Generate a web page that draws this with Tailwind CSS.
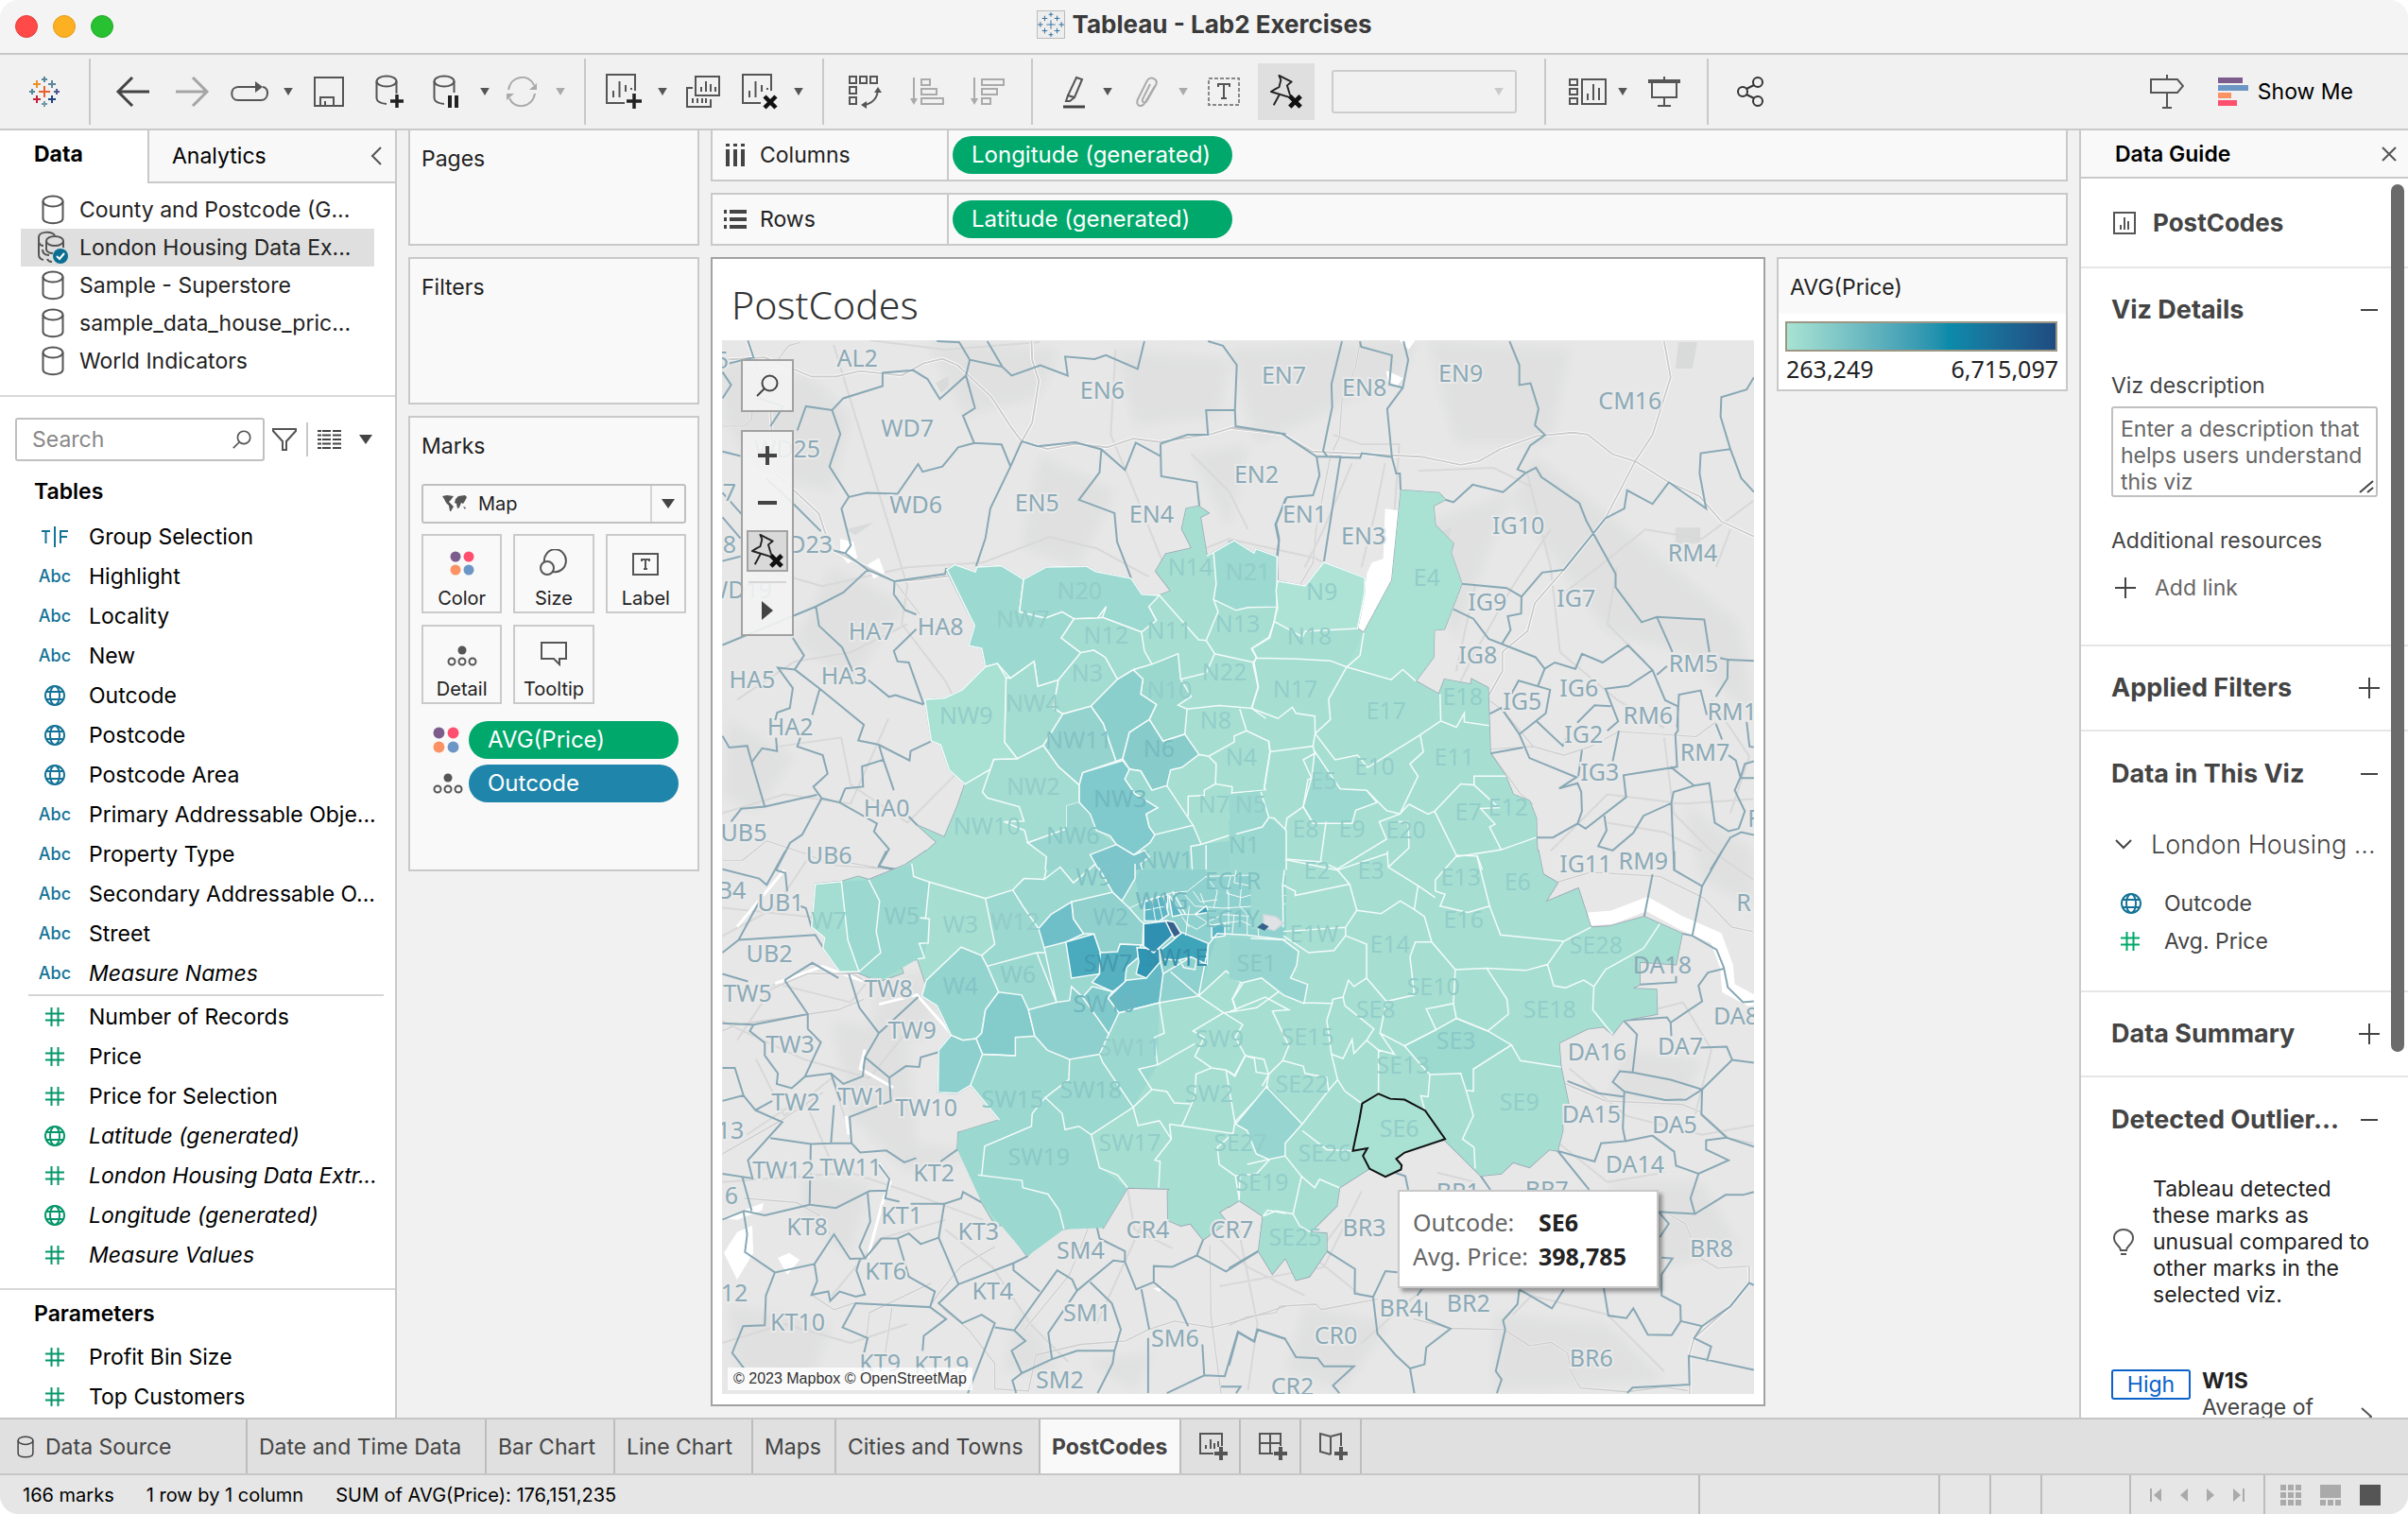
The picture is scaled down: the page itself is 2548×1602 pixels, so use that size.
<!DOCTYPE html>
<html lang="en">
<head>
<meta charset="utf-8">
<title>Tableau - Lab2 Exercises</title>
<script src="https://cdn.jsdelivr.net/npm/@tailwindcss/browser@4"></script>
</head>
<body class="bg-white">
<svg class="hidden" aria-hidden="true">
  <symbol id="caret" viewBox="0 0 12 10"><path d="M0 0H12L6 10Z" fill="currentColor"/></symbol>
  <symbol id="db" viewBox="0 0 24 32"><g fill="none" stroke="currentColor" stroke-width="2"><ellipse cx="12" cy="7" rx="10.500" ry="5.500"/><path d="M1.500 7V25C1.500 32 22.500 32 22.500 25V7"/></g></symbol>
  <symbol id="hash" viewBox="0 0 20 20"><path d="M6.500 0V20M13.500 0V20M0 6.500H20M0 13.500H20" fill="none" stroke="currentColor" stroke-width="2"/></symbol>
  <symbol id="globe" viewBox="0 0 22 22"><g fill="none" stroke="currentColor" stroke-width="2"><circle cx="11" cy="11" r="10"/><ellipse cx="11" cy="11" rx="5" ry="10"/><path d="M2 7H20M2 15H20"/></g></symbol>
  <symbol id="tf" viewBox="0 0 28 22"><path d="M0 5H9M4.500 5V18M14 0V22M20 18V5H28M20 11H27" fill="none" stroke="currentColor" stroke-width="2"/></symbol>
  <symbol id="lens" viewBox="0 0 24 24"><g fill="none" stroke="currentColor" stroke-width="2"><circle cx="14.500" cy="9.500" r="8"/><path d="M9 15L1 23"/></g></symbol>
  <symbol id="dots4" viewBox="0 0 26 26"><circle cx="6" cy="6" r="5.500" fill="#7b5c8d"/><circle cx="20" cy="6" r="5.500" fill="#ff4f6e"/><circle cx="6" cy="20" r="5.500" fill="#fb9263"/><circle cx="20" cy="20" r="5.500" fill="#6c96c5"/></symbol>
  <symbol id="detail" viewBox="0 0 32 22"><circle cx="16" cy="5" r="4.500" fill="#555"/><g fill="none" stroke="#555" stroke-width="2"><circle cx="5" cy="17" r="3.500"/><circle cx="16" cy="17" r="3.500"/><circle cx="27" cy="17" r="3.500"/></g></symbol>
  <symbol id="pin" viewBox="0 0 38 38"><path d="M11 1L25 8L20 12L23 22L25 26L2 19L7 16L11 14L13 6Z M11 23L5 34" fill="none" stroke="#222" stroke-width="2" stroke-linejoin="round"/><path d="M23 24L35 36M35 24L23 36" stroke="#111" stroke-width="5"/></symbol>
  <symbol id="sheet" viewBox="0 0 40 40"><path d="M21 32H2V2H32V19M9 26V19M15.500 26V9M22 20V13M28 18V16" fill="none" stroke="#555" stroke-width="2"/></symbol>
  <symbol id="plus" viewBox="0 0 22 22"><path d="M11 0V22M0 11H22" stroke="#444" stroke-width="2"/></symbol>
  <symbol id="minus" viewBox="0 0 22 22"><path d="M2 11H20" stroke="#444" stroke-width="2"/></symbol>
</svg>

<div class="h-screen w-full flex flex-col overflow-hidden rounded-[20px] bg-[#f1f1f1] font-[Inter,sans-serif] text-[23px] leading-7 text-[#222]">
  <!-- Title bar -->
  <header class="relative h-[58px] shrink-0 pb-1 flex items-center justify-center border-b-2 border-[#c8c8c8] bg-[#f4f4f4]">
    <div class="absolute left-4 top-4 flex gap-4">
      <button aria-label="Close" class="size-6 rounded-full bg-[#ff4a47] border border-[#e0403d]"></button>
      <button aria-label="Minimise" class="size-6 rounded-full bg-[#fdb022] border border-[#e09c1c]"></button>
      <button aria-label="Zoom" class="size-6 rounded-full bg-[#28c131] border border-[#1fa828]"></button>
    </div>
    <svg class="w-[30px] h-[30px] mr-2 bg-[#eee] border border-[#bbb]" viewBox="0 0 30 30"><path d="M15 10V20M10 15H20M15 1V6M12.500 3.500H17.500M15 24V29M12.500 26.500H17.500M3 12V18M0 15H6M27 12V18M24 15H30M8 5V11M5 8H11M22 5V11M19 8H25M8 19V25M5 22H11M22 19V25M19 22H25" stroke="#2a6a9c" stroke-width="1"/></svg>
    <h1 class="text-[26px] font-bold text-[#3a3a3a]">Tableau - Lab2 Exercises</h1>
  </header>

  <!-- Toolbar -->
  <nav class="h-[78px] shrink-0 flex items-center text-[#555]" aria-label="Toolbar">
    <div class="h-[70px] w-24 border-r-2 border-[#c9c9c9] flex items-center justify-center">
      <svg class="size-8" viewBox="0 0 32 32" fill="none" stroke-width="2"><path d="M16 10V22M10 16H22" stroke="#e8622c"/><path d="M8 4V12M4 8H12" stroke="#eb912c"/><path d="M24 4V12M20 8H28" stroke="#5b879b"/><path d="M8 20V28M4 24H12" stroke="#c72037"/><path d="M24 20V28M20 24H28" stroke="#1f447e"/><path d="M16 0V6M13 3H19M3 13V19M0 16H6" stroke="#59879b"/><path d="M29 13V19M26 16H32" stroke="#4e5a8f"/><path d="M16 26V32M13 29H19" stroke="#7199a6"/></svg>
    </div>
    <div class="h-[70px] w-[524px] pl-3 border-r-2 border-[#c9c9c9] flex items-center">
      <button aria-label="Back" class="w-16 flex justify-center"><svg class="w-9 h-8" viewBox="0 0 36 32"><path d="M36 16H3M18 1L3 16L18 31" fill="none" stroke="#444" stroke-width="3"/></svg></button>
      <button aria-label="Forward" class="w-16 flex justify-center"><svg class="w-9 h-8" viewBox="0 0 36 32"><path d="M0 16H33M18 1L33 16L18 31" fill="none" stroke="#a5a5a5" stroke-width="3"/></svg></button>
      <button aria-label="Redo" class="w-14 flex justify-center"><svg class="w-10 h-6" viewBox="0 0 40 24"><path d="M28 7H8C-1 7 -1 21 8 21H32C41 21 41 7 34 7" fill="none" stroke="#555" stroke-width="2"/><path d="M26 1L34 7L26 13Z" fill="#555"/></svg></button>
      <button aria-label="Redo options" class="w-[26px] flex justify-center"><svg class="w-2.5 h-2"><use href="#caret"/></svg></button>
      <button aria-label="Save" class="w-[60px] flex justify-center"><svg class="size-8" viewBox="0 0 32 32" fill="none" stroke="#555" stroke-width="2"><path d="M1 1H31V31H1ZM7 31V22H21V31M12 31V26"/></svg></button>
      <button aria-label="New data source" class="w-[68px] flex justify-center"><svg class="w-8 h-9" viewBox="0 0 32 36"><g fill="none" stroke="#555" stroke-width="2"><ellipse cx="13" cy="7" rx="10.500" ry="5.500"/><path d="M2.500 7V25Q3 30 13 31M23.500 7V20"/></g><path d="M24 21V35M17 28H31" stroke="#222" stroke-width="3.500"/></svg></button>
      <button aria-label="Pause updates" class="w-[52px] flex justify-center"><svg class="w-8 h-9" viewBox="0 0 32 36"><g fill="none" stroke="#555" stroke-width="2"><ellipse cx="14" cy="7" rx="10.500" ry="5.500"/><path d="M3.500 7V25Q4 30 14 31M24.500 7V19"/></g><path d="M20 22V35M27 22V35" stroke="#222" stroke-width="4"/></svg></button>
      <button aria-label="Pause options" class="w-[30px] flex justify-center"><svg class="w-2.5 h-2"><use href="#caret"/></svg></button>
      <button aria-label="Refresh" class="w-12 flex justify-center"><svg class="w-9 h-8" viewBox="0 0 36 32"><g fill="none" stroke="#aaa" stroke-width="2"><path d="M4 14C7 -2 26 -3 31 9M32 18C29 34 10 35 5 23"/></g><path d="M34 7V14H26ZM2 25V18H10Z" fill="#aaa"/></svg></button>
      <button aria-label="Refresh options" class="w-[34px] flex justify-center text-[#aaa]"><svg class="w-2.5 h-2"><use href="#caret"/></svg></button>
    </div>
    <div class="h-[70px] w-[252px] pl-2.5 border-r-2 border-[#c9c9c9] flex items-center">
      <button aria-label="New worksheet" class="w-[60px] flex justify-center"><svg class="size-10" viewBox="0 0 40 40"><use href="#sheet"/><path d="M31 22V38M23 30H39" stroke="#222" stroke-width="3.500"/></svg></button>
      <button aria-label="Worksheet options" class="w-[22px] flex justify-center"><svg class="w-2.5 h-2"><use href="#caret"/></svg></button>
      <button aria-label="Duplicate" class="w-16 flex justify-center"><svg class="w-9 h-[34px]" viewBox="0 0 36 34" fill="none" stroke="#555" stroke-width="2"><path d="M10 1H35V21H10ZM7 13H1V33H26V25M16 17V12M21 17V6M26 17V9M31 17V12M7 29V24M12 29V24M17 29V24M21 29V24"/></svg></button>
      <button aria-label="Clear sheet" class="w-14 flex justify-center"><svg class="size-10" viewBox="0 0 40 40"><use href="#sheet"/><path d="M25 25L37 37M37 25L25 37" stroke="#111" stroke-width="4.500"/></svg></button>
      <button aria-label="Clear options" class="w-[26px] flex justify-center"><svg class="w-2.5 h-2"><use href="#caret"/></svg></button>
    </div>
    <div class="h-[70px] w-[221px] pl-3 border-r-2 border-[#c9c9c9] flex items-center">
      <button aria-label="Swap rows and columns" class="w-16 flex justify-center"><svg class="w-9 h-9" viewBox="0 0 36 36" fill="none" stroke="#555" stroke-width="2"><path d="M1 2H8V9H1ZM12 2H19V9H12ZM23 2H30V9H23ZM1 13H8V20H1ZM1 24H8V31H1ZM17 32Q30 29 31 16"/><path d="M27 19L31 13L35 19ZM19 28L13 32L19 36Z" fill="#555" stroke="none"/></svg></button>
      <button aria-label="Sort ascending" class="w-[66px] flex justify-center"><svg class="w-9 h-[30px]" viewBox="0 0 36 30" fill="none" stroke="#aaa" stroke-width="2"><path d="M4 0V26M12 2H21V8H12ZM12 12H28V18H12ZM12 22H35V28H12Z"/><path d="M0 22H8L4 29Z" fill="#aaa" stroke="none"/></svg></button>
      <button aria-label="Sort descending" class="w-[62px] flex justify-center"><svg class="w-9 h-[30px]" viewBox="0 0 36 30" fill="none" stroke="#aaa" stroke-width="2"><path d="M4 0V26M12 2H35V8H12ZM12 12H28V18H12ZM12 22H21V28H12Z"/><path d="M0 22H8L4 29Z" fill="#aaa" stroke="none"/></svg></button>
    </div>
    <div class="h-[70px] w-[543px] pl-5 border-r-2 border-[#c9c9c9] flex items-center">
      <button aria-label="Highlight" class="w-12 flex justify-center"><svg class="w-7 h-9" viewBox="0 0 28 36"><path d="M16 3L22 5L14 24L7 22Z M7 22L5 28L9 28L14 24" fill="none" stroke="#555" stroke-width="2"/><path d="M2 34H25" stroke="#444" stroke-width="3"/></svg></button>
      <button aria-label="Highlight options" class="w-[22px] flex justify-center"><svg class="w-2.5 h-2"><use href="#caret"/></svg></button>
      <button aria-label="Group members" class="w-[62px] flex justify-center"><svg class="w-7 h-8" viewBox="0 0 28 32"><path d="M17 8L9 24C8 28 12 29 14 25L23 9C26 3 18 -1 14 4L4 24C1 31 8 34 12 27L22 10" fill="none" stroke="#aaa" stroke-width="2"/></svg></button>
      <button aria-label="Group options" class="w-3.5 flex justify-center text-[#aaa]"><svg class="w-2.5 h-2"><use href="#caret"/></svg></button>
      <button aria-label="Show mark labels" class="w-[72px] flex justify-center"><svg class="w-[34px] h-[30px]" viewBox="0 0 34 30"><path d="M1 1H33V29H1Z" fill="none" stroke="#888" stroke-width="2" stroke-dasharray="4 2"/><path d="M11 10V7H23V10M17 7V22M14 22H20" fill="none" stroke="#555" stroke-width="2"/></svg></button>
      <button aria-label="Fix axes" class="w-[60px] h-[60px] flex items-center justify-center bg-[#dfdfdf]"><svg class="size-9"><use href="#pin"/></svg></button>
      <span class="relative ml-[18px] flex items-center">
        <select aria-label="Fit" class="appearance-none w-[196px] h-[46px] border-2 border-[#cdcdcd] rounded-[3px]"><option></option></select>
        <svg class="absolute right-3 w-3.5 h-2 text-[#c9c9c9]"><use href="#caret"/></svg>
      </span>
    </div>
    <div class="h-[70px] w-[172px] pl-3.5 border-r-2 border-[#c9c9c9] flex items-center">
      <button aria-label="Show cards" class="w-[60px] flex justify-center"><svg class="w-10 h-[30px]" viewBox="0 0 40 30" fill="none" stroke="#555" stroke-width="2"><path d="M1 2H9V8H1ZM1 12H9V18H1ZM1 22H9V28H1ZM14 2H39V28H14ZM20 24V17M26 24V7M32 24V11"/></svg></button>
      <button aria-label="Card options" class="w-3.5 flex justify-center"><svg class="w-2.5 h-2"><use href="#caret"/></svg></button>
      <button aria-label="Presentation mode" class="w-[74px] flex justify-center"><svg class="w-[34px] h-8" viewBox="0 0 34 32" fill="none" stroke="#555" stroke-width="2"><path d="M0 5H34" stroke-width="4"/><path d="M4 6V22H30V6M17 0V4M17 22V30M10 31H24"/></svg></button>
    </div>
    <button aria-label="Share" class="ml-3.5 w-[60px] flex justify-center"><svg class="w-[30px] h-8" viewBox="0 0 30 32" fill="none" stroke="#333" stroke-width="2"><circle cx="7" cy="16" r="5"/><circle cx="23" cy="6" r="5"/><circle cx="23" cy="26" r="5"/><path d="M11 13L19 9M11 19L19 23"/></svg></button>
    <button aria-label="Guide" class="ml-auto w-[60px] flex justify-center"><svg class="w-9 h-9" viewBox="0 0 36 36" fill="none" stroke="#555" stroke-width="2"><path d="M1 5H29L35 12L29 19H1ZM18 0V5M18 19V34M13 35H23"/></svg></button>
    <button class="ml-6 mr-[58px] flex items-center gap-2.5 text-black"><svg class="w-8 h-[30px]" viewBox="0 0 32 30"><path d="M0 0H26V6H0Z" fill="#7b5c8d"/><path d="M0 8H32V14H0Z" fill="#6c96c5"/><path d="M0 16H14V22H0Z" fill="#fb9263"/><path d="M0 24H20V30H0Z" fill="#ff4f6e"/></svg>Show Me</button>
  </nav>

  <main class="flex-1 min-h-0 flex border-t-2 border-[#c9c9c9]">
    <!-- Data pane -->
    <aside class="w-[420px] shrink-0 h-full overflow-hidden bg-white border-r-2 border-[#c9c9c9] text-black">
      <div class="flex h-14">
        <button class="w-[156px] pl-9 pb-1.5 text-left font-bold">Data</button>
        <button class="flex-1 pl-6 pr-3.5 flex items-center justify-between bg-[#f8f8f8] border-l-2 border-b-2 border-[#c9c9c9]">Analytics<svg class="w-3 h-5" viewBox="0 0 12 20"><path d="M11 1L2 10L11 19" fill="none" stroke="#555" stroke-width="2"/></svg></button>
      </div>
      <ul class="pt-2 pb-4 pl-[22px] pr-[22px] border-b-2 border-[#d9d9d9] text-[#222]">
        <li class="h-10 pl-[22px] flex items-center gap-4"><svg class="w-6 h-8 text-[#555]"><use href="#db"/></svg>County and Postcode (G...</li>
        <li class="h-10 pl-4 flex items-center gap-3 bg-[#dfdfdf]"><svg class="w-[34px] h-9" viewBox="0 0 34 36"><g fill="none" stroke="#555" stroke-width="2"><path d="M20 5C16 0 3 1 3 7V25Q3 30 8 31M3 12Q4 16 8 16"/><ellipse cx="20" cy="11" rx="9" ry="5"/><path d="M11 11V20Q12 24 18 24M29 11V18M7 20Q7 26 14 26M12 30Q13 33 17 33"/></g><circle cx="26" cy="27" r="8" fill="#0b6f93"/><path d="M22 27L25 30L30 24" fill="none" stroke="#fff" stroke-width="2"/></svg>London Housing Data Ex...</li>
        <li class="h-10 pl-[22px] flex items-center gap-4"><svg class="w-6 h-8 text-[#555]"><use href="#db"/></svg>Sample - Superstore</li>
        <li class="h-10 pl-[22px] flex items-center gap-4"><svg class="w-6 h-8 text-[#555]"><use href="#db"/></svg>sample_data_house_pric...</li>
        <li class="h-10 pl-[22px] flex items-center gap-4"><svg class="w-6 h-8 text-[#555]"><use href="#db"/></svg>World Indicators</li>
      </ul>
      <div class="mt-[22px] pl-4 flex items-center text-[#555]">
        <label class="relative flex items-center"><input type="text" placeholder="Search" aria-label="Search" class="w-[264px] h-[46px] pl-4 border-2 border-[#c0c0c0] rounded-[3px] placeholder:text-[#888]"><svg class="absolute right-3.5 w-5 h-5"><use href="#lens"/></svg></label>
        <button aria-label="Filter" class="ml-2"><svg class="w-[26px] h-6" viewBox="0 0 26 24"><path d="M1 1H25V3L15 14V23H11V14L1 3Z" fill="none" stroke="#555" stroke-width="2"/></svg></button>
        <span class="ml-2.5 mr-2.5 w-0.5 h-9 bg-[#c9c9c9]"></span>
        <button aria-label="View as list" class="flex items-center gap-[18px]"><svg class="w-[26px] h-5" viewBox="0 0 26 20"><path d="M0 1H26M0 5.500H26M0 10H26M0 14.500H26M0 19H26" stroke="#444" stroke-width="2" stroke-dasharray="4 1 9 2 9 1"/></svg><svg class="w-3.5 h-2.5" viewBox="0 0 12 10" preserveAspectRatio="none"><path d="M0 0H12L6 10Z" fill="#444"/></svg></button>
      </div>
      <h2 class="mt-3 h-[47px] pl-9 flex items-start pt-1.5 font-semibold">Tables</h2>
      <ul class="text-[#147397] [&>li]:h-[42px] [&>li]:flex [&>li]:items-center [&_b]:w-[46px] [&_b]:ml-[35px] [&_b]:mr-[13px] [&_b]:flex [&_b]:justify-center [&_b]:text-[18px] [&_b]:font-medium [&_span]:text-black">
        <li><b><svg class="w-7 h-[22px]"><use href="#tf"/></svg></b><span>Group Selection</span></li>
        <li><b>Abc</b><span>Highlight</span></li>
        <li><b>Abc</b><span>Locality</span></li>
        <li><b>Abc</b><span>New</span></li>
        <li><b><svg class="size-[22px]"><use href="#globe"/></svg></b><span>Outcode</span></li>
        <li><b><svg class="size-[22px]"><use href="#globe"/></svg></b><span>Postcode</span></li>
        <li><b><svg class="size-[22px]"><use href="#globe"/></svg></b><span>Postcode Area</span></li>
        <li><b>Abc</b><span>Primary Addressable Obje...</span></li>
        <li><b>Abc</b><span>Property Type</span></li>
        <li><b>Abc</b><span>Secondary Addressable O...</span></li>
        <li><b>Abc</b><span>Street</span></li>
        <li><b>Abc</b><span class="italic">Measure Names</span></li>
      </ul>
      <hr class="ml-[30px] mr-3 mt-px mb-px border-t-2 border-[#d5d5d5]">
      <ul class="pb-3.5 border-b-2 border-[#d9d9d9] text-[#059669] [&>li]:h-[42px] [&>li]:flex [&>li]:items-center [&_b]:w-[46px] [&_b]:ml-[35px] [&_b]:mr-[13px] [&_b]:flex [&_b]:justify-center [&_span]:text-black">
        <li><b><svg class="size-5"><use href="#hash"/></svg></b><span>Number of Records</span></li>
        <li><b><svg class="size-5"><use href="#hash"/></svg></b><span>Price</span></li>
        <li><b><svg class="size-5"><use href="#hash"/></svg></b><span>Price for Selection</span></li>
        <li><b><svg class="size-[22px]"><use href="#globe"/></svg></b><span class="italic">Latitude (generated)</span></li>
        <li><b><svg class="size-5"><use href="#hash"/></svg></b><span class="italic">London Housing Data Extr...</span></li>
        <li><b><svg class="size-[22px]"><use href="#globe"/></svg></b><span class="italic">Longitude (generated)</span></li>
        <li><b><svg class="size-5"><use href="#hash"/></svg></b><span class="italic">Measure Values</span></li>
      </ul>
      <h2 class="h-[50px] pl-9 flex items-center font-semibold">Parameters</h2>
      <ul class="text-[#059669] [&>li]:h-[42px] [&>li]:flex [&>li]:items-center [&_b]:w-[46px] [&_b]:ml-[35px] [&_b]:mr-[13px] [&_b]:flex [&_b]:justify-center [&_span]:text-black">
        <li><b><svg class="size-5"><use href="#hash"/></svg></b><span>Profit Bin Size</span></li>
        <li><b><svg class="size-5"><use href="#hash"/></svg></b><span>Top Customers</span></li>
      </ul>
    </aside>

    <div class="flex-1 min-w-0 flex gap-3 px-3 pb-3 -mt-0.5">
      <!-- Cards -->
      <div class="w-[308px] shrink-0 flex flex-col gap-3 [&>section]:bg-[#f9f9f9] [&>section]:border-2 [&>section]:border-[#c9c9c9]">
        <section class="h-[124px] pl-3 pt-4"><h3>Pages</h3></section>
        <section class="h-[156px] pl-3 pt-4"><h3>Filters</h3></section>
        <section class="h-[482px] px-3 pt-4">
          <h3>Marks</h3>
          <div class="relative mt-[26px] h-[42px] flex items-center border-2 border-[#c0c0c0] rounded-[3px]">
            <svg class="absolute left-5 w-[26px] h-[18px]" viewBox="0 0 26 18"><path d="M0 1L5 0L12 1L9 5L7 7L9 9L12 12L9 17L8 17L7 11L4 8L2 4ZM14 4L17 1L24 0L26 2L24 6L22 9L20 8L18 13L16 14L15 9L13 8ZM22 12L25 13L24 15Z" fill="#555"/></svg>
            <select aria-label="Mark type" class="appearance-none w-full h-full pl-[58px] text-[20px]"><option>Map</option></select>
            <span class="absolute right-0 h-full w-9 flex items-center justify-center border-l-2 border-[#d5d5d5] pointer-events-none text-[#444]"><svg class="w-3.5 h-2.5" viewBox="0 0 12 10" preserveAspectRatio="none"><path d="M0 0H12L6 10Z" fill="currentColor"/></svg></span>
          </div>
          <div class="mt-[11px] grid grid-cols-3 gap-x-3 gap-y-3 text-[20px] [&>button]:h-[84px] [&>button]:border-2 [&>button]:border-[#cacaca] [&>button]:flex [&>button]:flex-col [&>button]:items-center [&>button]:justify-end [&>button]:pb-0.5 [&>button]:gap-3 [&>button]:leading-6">
            <button><svg class="size-[26px]"><use href="#dots4"/></svg>Color</button>
            <button><svg class="w-[30px] h-7" viewBox="0 0 30 28" fill="none" stroke="#555" stroke-width="2"><path d="M5 14A11.500 12 0 1 1 14 24"/><circle cx="8" cy="20" r="7"/></svg>Size</button>
            <button><svg class="w-7 h-6" viewBox="0 0 28 24" fill="none" stroke="#555" stroke-width="2"><path d="M1 1H27V23H1ZM10 9V7H18V9M14 7V17M12 17H16"/></svg>Label</button>
            <button><svg class="w-8 h-[22px]"><use href="#detail"/></svg>Detail</button>
            <button><svg class="w-7 h-[26px]" viewBox="0 0 28 26" fill="none" stroke="#555" stroke-width="2"><path d="M1 1H27V18H20V24L14 18H1Z"/></svg>Tooltip</button>
          </div>
          <div class="mt-[18px] pl-3 pr-2 flex flex-col gap-1.5 text-white text-[24px]">
            <div class="flex items-center gap-2.5"><svg class="w-7 h-7"><use href="#dots4"/></svg><span class="flex-1 h-10 pl-5 flex items-center rounded-full bg-[#00a86b]">AVG(Price)</span></div>
            <div class="flex items-center gap-1.5"><svg class="w-8 h-[22px]"><use href="#detail"/></svg><span class="flex-1 h-10 pl-5 flex items-center rounded-full bg-[#1f85aa]">Outcode</span></div>
          </div>
        </section>
      </div>

      <!-- Shelves and viz -->
      <div class="flex-1 min-w-0 flex flex-col gap-3">
        <section class="h-14 shrink-0 flex items-center bg-[#f9f9f9] border-2 border-[#c9c9c9]">
          <h3 class="w-[250px] h-full pl-3 flex items-center gap-3.5 border-r-2 border-[#c9c9c9]"><svg class="w-6 h-6" viewBox="0 0 24 24"><path d="M4 0V3M12 0V3M20 0V3M4 6V24M12 6V24M20 6V24" stroke="#444" stroke-width="4"/></svg>Columns</h3>
          <span class="ml-1 w-[296px] h-10 pl-5 flex items-center rounded-full bg-[#00a86b] text-white text-[24px]">Longitude (generated)</span>
        </section>
        <section class="h-14 shrink-0 flex items-center bg-[#f9f9f9] border-2 border-[#c9c9c9]">
          <h3 class="w-[250px] h-full pl-3 flex items-center gap-3.5 border-r-2 border-[#c9c9c9]"><svg class="w-6 h-5" viewBox="0 0 24 20"><path d="M0 2H3M0 10H3M0 18H3M6 2H24M6 10H24M6 18H24" stroke="#444" stroke-width="4"/></svg>Rows</h3>
          <span class="ml-1 w-[296px] h-10 pl-5 flex items-center rounded-full bg-[#00a86b] text-white text-[24px]">Latitude (generated)</span>
        </section>
        <div class="flex-1 min-h-0 flex items-start gap-3">
          <section class="flex-1 min-w-0 h-full flex flex-col px-2.5 pb-[11px] bg-white border-2 border-[#a2a2a2] font-['Noto_Sans',sans-serif]">
            <h2 class="h-[86px] shrink-0 pl-2.5 pt-[22px] text-[41px] leading-[52px] font-light text-[#333]">PostCodes</h2>
            <div class="relative flex-1 min-h-0">
<svg class="w-full h-full" viewBox="764 360 1091 1114" preserveAspectRatio="xMidYMid slice" role="img" aria-label="Average price by outcode">
<defs>
<filter id="soft"><feGaussianBlur stdDeviation="6"/></filter>
<g id="roads">
<g transform="translate(740 340) scale(.3954 .36995)"><path d="M62 110 175 103 300 158 365 158 430 142 540 155 600 120 650 107 690 125 780 215 835 305 862 343 930 365 1005 350 1090 360 1160 335 1230 345 1370 322 1430 302 1568 325M888 57 890 110 908 170 890 290 862 343M130 57 160 150 190 250 200 430 320 550 335 600 360 655 522 743 590 738 665 728"/></g>
<g transform="translate(1300 340) scale(.38265 .36995)"><path d="M0 305 147 322 230 372 530 387 640 410 690 400 750 365 850 328 950 318 990 323 1060 380 1122 400 1215 460 1300 500 1360 572 1450 615M1202 57 1220 160 1170 325 1122 400 1040 563 925 710 845 805 825 885 755 945 755 1000 718 1068"/></g>
<g transform="translate(1300 900) scale(.38265 .4477)"><path d="M1437 980 1437 1020 1385 1075 1285 1150 1272 1190 1272 1282"/></g>
</g>
<g id="minor">
<g transform="translate(740 340) scale(.3954 .36995)"><path d="M862 343 832 415 778 535 765 620 745 690M210 110 238 70 270 60M62 300 120 300 140 280 150 150M522 743 590 838M62 1540 115 1540 180 1485 280 1520 360 1555 540 1568"/></g>
<g transform="translate(1300 340) scale(.38265 .36995)"><path d="M362 57 350 130 312 225 305 330 280 385 240 600 232 690 195 755M722 1085 760 1115 840 1215 925 1240 1000 1215 1077 1172 1290 1187 1345 1145M725 1222 840 1215M725 1235 805 1350 840 1380"/></g>
<g transform="translate(740 900) scale(.3954 .4477)"><path d="M195 325 290 290 410 290 450 310M62 425 100 410 370 375 440 350M62 715 230 630 330 570M120 820 260 830 320 860 350 905M300 1048 360 1083 410 1068 615 1077 640 1045 700 980 790 935M650 1080 720 1130 790 1210 790 1270 880 1275 900 1190 1020 1165 1140 1157 1200 1130 1270 1110 1370 1125 1460 1105 1568 1075M1365 930 1368 1100 1395 1280M620 1020 455 1090 440 1200M515 1080 495 1200M870 1130 990 1000 1040 890M350 20 480 40"/></g>
<g transform="translate(1300 900) scale(.38265 .4477)"><path d="M0 1120 50 1100 130 1090 140 1075 240 1070 255 1083 410 1058M510 1105 610 1127 760 1130 830 1168 890 1160 935 1185 945 1230 970 1268 1100 1277 1200 1265 1272 1275M1215 857 1260 880 1300 960 1350 985 1437 980M900 75 1000 50 1190 60 1310 110 1390 180 1447 190M917 545 1040 590 1250 598 1300 615 1380 677 1447 690"/></g>
</g>
<g id="city">
<g transform="translate(740 340) scale(.3954 .36995)"><path d="M540 1568 570 1550 634 1488 583 1440 655 1474 690 1385 710 1323 668 1282 645 1210 620 1200 603 1080 655 1077 703 1053 765 987 755 935 720 927 736 870 660 710 683 695 738 716 742 702 807 698 867 737 928 702 1035 700 1060 715 1155 735 1183 780 1230 783 1260 770 1220 714 1247 665 1316 648 1290 593 1302 535 1335 528 1362 548 1340 560 1357 670 1430 626 1483 662 1487 650 1545 672 1546 742 1568 745V1568Z"/></g>
<g transform="translate(1300 340) scale(.38265 .36995)"><path d="M0 1568V630L15 626 68 662 74 650 132 672 134 742 210 756 262 688 376 733 374 780 355 878 372 890 450 740 475 482 580 490 598 510 565 527 570 583 620 635 613 660 643 750 595 880 567 882 565 960 516 1028 580 1065 595 1023 668 1037 670 1022 716 1047 722 1235 765 1300 785 1352 830 1370 849 1420 850 1475 855 1568Z"/></g>
<g transform="translate(740 900) scale(.3954 .4477)"><path d="M605 0 550 33 453 68 425 60 380 72 310 78 300 180 335 205 330 230 375 285 425 287 480 308 545 288 537 265 583 255 607 318 595 343 635 365 673 435 640 470 638 570 690 572 725 553 802 635 692 665 690 705 718 718 745 765 755 830 793 885 835 880 830 900 877 957 938 888 975 893 1060 876 1080 890 1145 795 1258 798 1252 804 1253 872 1287 885 1313 880 1347 918 1411 877 1390 853 1444 823 1507 862 1495 945 1532 998 1568 960V0Z"/></g>
<g transform="translate(1300 900) scale(.38265 .4477)"><path d="M0 0H855L868 55 908 75 875 120 965 88 1000 180 1050 178 1147 155 1252 195 1235 268 1135 262 1135 315 1115 325 1181 327 1183 385 1090 400 1060 433 1035 415 990 420 912 453 917 510 940 605 920 615 922 660 908 708 885 705 830 747 785 735 752 762 695 767 595 682 485 712 462 727 477 742 475 752 432 769 388 750 305 795 298 838 225 900 270 903 270 945 222 1005 185 1013 155 960 120 998 83 945 94 862 28 825 0 840Z"/></g>
</g>
</defs>
<rect x="700" y="300" width="1220" height="1240" fill="#e7e7e7"/>
<g fill="#dadcdb" filter="url(#soft)" opacity=".6">
<path d="M764 380 860 400 900 440 880 520 800 500 764 440ZM980 360 1120 370 1100 420 1020 440ZM1180 370 1300 380 1290 440 1200 450ZM1300 370 1500 360 1480 400 1330 470ZM1510 360 1660 370 1640 470 1540 470ZM1620 480 1720 560 1840 660 1855 760 1780 690 1700 670 1600 530ZM1490 560 1600 520 1560 620 1540 680ZM880 600 960 640 900 720 840 680ZM770 760 840 800 800 860 764 840ZM1100 480 1180 520 1140 600 1080 580ZM1260 480 1320 470 1300 560ZM880 1080 960 1090 970 1210 1050 1220 960 1240 900 1180ZM850 1240 920 1250 900 1330 850 1290ZM770 1380 880 1400 860 1460 780 1450ZM1080 1380 1120 1450 1060 1450ZM1380 1380 1470 1400 1420 1470 1360 1450ZM1580 1390 1700 1400 1760 1460 1580 1470ZM1700 1250 1800 1250 1840 1320 1760 1340ZM1720 1110 1800 1120 1780 1170 1700 1160ZM1780 850 1855 900 1855 960 1800 930ZM1150 1440 1220 1430 1200 1470ZM930 1040 1000 1020 980 1100 920 1100Z"/>
</g>
<g fill="#d9dbda"><path d="M990 405 1003 398 1004 408 996 416ZM1775 362H1795L1790 390H1772ZM895 560 925 552 905 566ZM1772 558H1798V575H1772ZM1525 562 1535 558 1532 570Z"/></g>
<g fill="none" stroke="#d8d8d8" stroke-width="2" stroke-linejoin="round">
<path d="M882 365 960 620 954 660 1000 720 1040 800M920 360 1000 370 1100 362M800 600 870 620 960 600 1040 595 1110 568 1160 580 1215 610M1180 370 1175 460 1200 520 1240 620M1260 480 1300 520 1320 560M1250 590 1300 570 1390 590 1450 620 1470 635M1430 490 1400 560 1380 600M1465 490 1455 540 1440 600M1410 460 1440 470 1480 470 1475 540M1500 498 1580 495 1620 515M1615 500 1640 600 1650 690 1710 740 1760 770M1640 560 1600 620 1560 690 1545 720M1854 530 1800 570 1740 560 1690 600 1650 630M1710 600 1700 660 1740 700M1560 620 1540 710M780 740 840 700 900 690 960 660M820 790 890 780 900 830 960 870 1010 820M764 860 830 840 900 850 940 760M764 960 860 970 1000 950M764 990 820 960 860 900M780 1100 820 1040 900 1060 940 1010M764 1080 850 1120 920 1140 960 1090M800 1120 830 1180 880 1140 900 1200M790 1200 850 1160 880 1230M764 1250 900 1240 960 1260 1040 1290M880 1370 930 1310 1000 1290M1000 1300 1050 1340 1090 1400 1130 1440M1190 1240 1200 1300 1240 1320M1210 1290 1160 1400M1280 1300 1320 1340 1380 1370M1290 1360 1400 1340 1440 1260M1420 1290 1390 1330 1440 1370M1540 1300 1520 1350 1440 1420M1600 1390 1620 1370 1700 1390 1760 1450M1520 1240 1560 1250M1650 1210 1700 1250 1760 1240M1660 1130 1720 1180 1800 1200 1855 1190M1700 1080 1780 1060 1810 1110 1790 1190M1640 900 1700 840 1780 850 1854 845M1760 780 1770 860 1810 900 1854 930M1700 870 1760 880 1800 900M1815 600 1830 560M1810 740 1850 800 1830 860M764 1420 830 1400 900 1420 960 1400M1310 1300 1330 1400 1320 1470"/></g>
<g fill="#fff">
<path d="M1400 360H1410ZM1480 360H1497L1490 370ZM889 570 903 573 907 590 897 596 889 586ZM918 597 930 590 936 606 924 612ZM1465 538 1480 540 1474 604 1472 613 1442 668 1437 664 1446 606 1451 595 1463 591ZM1466 392 1484 400 1478 408 1468 404Z"/>
<path d="M766 1325 780 1303 796 1296 797 1325 780 1353ZM823 1330 835 1325 846 1332 833 1348ZM764 1288 808 1272 806 1280 780 1290ZM1220 1362 1232 1361 1226 1366Z"/>
</g>
<path d="M1680 972 1705 970 1742 956 1778 976 1815 992 1826 1022 1828 1045 1856 1060" fill="none" stroke="#fff" stroke-width="14"/>
<path d="M820 1040 870 1022 920 1040M930 1062 970 1052 1008 1095M915 1110 910 1130 945 1150M895 1180 898 1200M930 1230 942 1250 934 1270 918 1330M780 980 830 920" fill="none" stroke="#fff" stroke-width="3"/>
<g fill="none" stroke-linejoin="round" class="[&_path]:[vector-effect:non-scaling-stroke]">
<use href="#minor" stroke="#efefef" stroke-width="6"/>
<use href="#minor" stroke="#cbcbcb" stroke-width="3"/>
<use href="#roads" stroke="#fff" stroke-width="9"/>
<use href="#roads" stroke="#cbcbcb" stroke-width="5"/>
</g>
<!-- postcode boundaries outside the marks -->
<g fill="none" stroke="#88a8b5" stroke-width="2" class="[&_path]:[vector-effect:non-scaling-stroke]">
<g transform="translate(740 340) scale(.3954 .36995)"><path d="M130 55 145 103 62 125M62 145 85 182 62 220M635 57 695 60 723 110 810 130 835 155 912 126 985 155 978 101 1057 108 1087 97 1172 136 1190 57M770 57 810 130M723 110 713 155 643 222 610 165 572 140 490 147 490 185 385 220 355 254 285 243 262 312M355 254 377 322 348 415 400 502 380 535 405 640 390 663M400 502 447 490 530 493 585 408 597 430 650 415 692 360 735 348 705 270 737 248 713 155M735 348 808 352 832 415M862 343 832 415 778 535 765 620 740 700M862 343 905 357 1005 346 1075 366 1138 425 1167 347 1233 385M1075 366 1070 432 1015 510 1110 548 1117 630 1155 735M1233 350 1235 443 1330 460 1337 528M1233 350 1305 324 1360 324 1355 254 1432 254 1437 125 1400 70 1360 57M1432 254 1434 300 1568 322M1568 505 1542 580 1550 620 1546 672M180 450 250 520 325 600M360 655 390 663 450 710 522 743 657 722 660 705M450 710 385 775 312 815 62 925M312 815 320 870 382 932 410 1000M452 1025 507 1073 525 1068 600 1095M522 743 520 780 550 825 580 838M580 880 520 942 530 972 560 975 600 1095M250 905 280 955 255 995 210 990 250 1048 242 1105 208 1118 203 1140M255 995 322 1050 440 1153 425 1198 480 1210 562 1255 565 1228 620 1200M322 1050 302 1125M270 1190 262 1215 330 1240 343 1293 305 1330 327 1363M390 1335 438 1330 435 1272 492 1253 480 1210M492 1253 520 1340M62 1185 80 1218 128 1213 140 1260 168 1220 208 1228 205 1190M140 1260 175 1387 315 1353M85 1430 112 1393 175 1387M327 1363 275 1467 243 1490 205 1568M327 1363 375 1375 475 1435 467 1458 507 1508 480 1558 540 1568M560 1415 583 1440M375 1375 390 1335M62 372 110 385M62 490 112 550M62 560 110 620M62 685 110 672M190 300 225 243 160 220"/></g>
<g transform="translate(1300 340) scale(.38265 .36995)"><path d="M312 57 283 180 285 245 260 370 272 387 362 390 367 377 450 388 437 250 480 190 495 110 482 57M362 57 365 73 450 97 443 180 480 190M450 388 462 435 472 435 474 482M147 322 242 387 308 387 262 688M242 387 250 440 232 497 160 503 128 580 138 630 132 672M775 57 802 125 802 182 833 177 855 250 845 297 873 325 832 355 797 423 820 433 757 488 673 467 620 517 598 510M820 433 848 418 863 445 968 520 988 572 1068 722 1068 760 1140 860 1182 845 1313 852 1327 945M1182 845 1225 945M643 750 767 762 808 787 807 835 770 843 778 882 755 920M808 787 865 718 925 710 1040 563 1092 535 1100 483 1170 522 1215 460 1318 535 1300 435 1303 377 1385 365 1358 272 1360 217 1430 195 1450 160M1385 365 1415 448 1450 488M620 823 675 850 717 907 847 960 872 993 853 1043M872 993 900 975 957 993 975 950 1032 975 1102 926 1170 997 1103 1042 1040 1050 1075 1143 1045 1170M1170 997 1205 1083 1240 1100 1240 1170 1233 1180 1238 1273 1090 1297 1097 1360 985 1450 963 1435 975 1400 973 1345 963 1320 912 1335 960 1303 830 1248 802 1180M722 1235 812 1218M720 1122 752 1105 802 1180 875 1120 887 1053 800 1027 780 1065M850 1143 922 1213 935 1185M962 1147 1010 1097 1055 1100M975 1225 965 1300M1077 1170 1060 1257M1182 1010 1210 985M1357 962 1378 967 1377 1020 1345 1073M1378 967 1450 970M1238 1160 1243 1067 1303 1055 1320 1125M1220 1273 1285 1327 1228 1345 1222 1377 1145 1413 1117 1462 1060 1512 1020 1500 1043 1455 1037 1413M1222 1377 1230 1568M1285 1327 1327 1320 1342 1433 1380 1457 1408 1450M1450 1468 1415 1460 1385 1475 1330 1568M963 1435 895 1475 850 1475M1380 1240 1400 1255 1413 1303 1397 1340 1425 1400 1408 1450M1450 1305H1413L1425 1265 1450 1257M1345 1150 1362 1195M1430 1145 1438 1215 1450 1217"/></g>
<g transform="translate(740 900) scale(.3954 .4477)"><path d="M62 43 160 65 180 80 230 0M205 45 230 52 235 95M160 120 105 210 62 240M105 210 310 198 332 230M270 130 285 135 300 180M500 0 480 35 520 45M62 290 130 308M228 305 302 264 372 300M400 290 428 370 480 430 585 345M228 305 290 385 290 420 325 452 282 533 247 560 207 550 210 525 175 483 175 453 135 425 145 410 290 385M62 407 145 410M282 533 352 525 378 590M352 525 385 550 437 532 443 487 480 430M443 487 508 535 512 590 402 628 407 690 430 712 500 707 548 735 580 725M645 733 690 705M508 535 552 508 588 510 592 487 640 475M62 512 95 512 118 577 62 590M118 577 150 612 195 590M150 612 222 640 130 730 142 773 62 762M360 600 352 690 298 692 190 678M352 690 407 690M298 692 295 835 365 843 455 803 500 802M480 740 508 775 497 820 535 828M62 870 120 850 175 860 295 835M115 770 140 850M450 808 457 875 428 935 443 962 403 963 360 905 308 975 202 995 122 947 128 905 118 850M308 975 315 1015 300 1048 345 1040 350 1062 375 1040 418 1052 443 1047 420 990 430 963M443 962 487 915 530 915 560 903 592 928 640 913 655 833 565 833M655 833 700 820 705 805 755 830M530 915 560 1005 630 1040 617 1077 418 1068 383 1125 450 1150 432 1215M640 913 693 1023 640 1068 703 1115 755 1095 790 1115 718 1280M617 1077 660 1105 600 1145 597 1180M693 1023 840 973 877 957M840 973 840 990 910 1040M202 995 178 1050 175 1120 117 1122 88 1185 120 1222M790 1125 842 1132 957 990 997 1012 1010 1038 933 1138 943 1200 1010 1180 1110 1180 1105 1210 1065 1280M1010 1038 1107 967 1138 970 1138 945 1070 915 1060 876M1045 1018 1103 1068 1127 1130 1110 1180M1138 970 1168 1035 1215 1018 1215 980 1265 982 1330 955 1347 918M1215 1018 1275 1062 1307 1122M1182 1035 1203 1130M1200 1150 1200 1280M1330 955 1408 993 1495 945M842 1132 872 1157 835 1180 862 1233 837 1250 847 1280M862 1233 943 1200M1250 1280 1350 1238 1405 1240 1440 1135 1483 1158 1493 1130 1568 1152M1345 1165 1350 1238M1395 1265 1447 1265 1435 1280"/></g>
<g transform="translate(1300 900) scale(.38265 .4477)"><path d="M1170 55 1147 155M1230 0 1230 45 1307 83 1280 200M1307 83 1362 0M1252 195 1280 200 1347 233 1367 275 1378 322 1420 357 1450 355M1367 278 1323 287 1297 318 1307 355 1220 405 1210 393 1090 400M1135 315 1235 310 1235 295M1220 405 1222 437M1090 400 1127 433 1115 523 1080 520 1060 545 1092 568 1205 588 1263 587 1307 563 1220 540 1115 523M1307 563 1390 493 1375 462 1300 464M1390 493 1450 500M1307 563 1305 622 1375 677 1450 698M935 543 1020 572 1092 580M1092 568 1088 655 1095 685 1028 690 1010 733 908 708 995 800M1095 685 1170 672 1230 710 1235 743 1297 762 1380 730 1318 705 1318 683 1375 677M1297 762 1275 820 1287 857 1187 852M1287 857 1372 812 1420 812 1450 805M695 767 722 800M460 760 487 768 495 800M1187 852 1215 880 1190 912M1195 960 1225 962 1195 1000 1195 1050 1247 1073 1248 1110 1223 1143 1157 1142 1117 1080 1098 1103 1048 1097 1035 1030M1248 1110 1307 1122 1385 1075 1437 1020 1450 1025M1307 1122 1285 1150 1332 1170 1320 1205M1450 1225 1270 1192 1272 1260 1115 1267 1100 1280M270 945 348 987 347 1045 398 1053 432 992 465 995M398 1053 410 1140 460 1190 500 1222 512 1280M500 1222 540 1212 545 1172 612 1128 545 1105 545 1065M0 985 80 945M0 1215 25 1137 70 1158 78 1130 155 1152 185 1195 245 1198 262 1217 345 1217 287 1262 305 1280M802 1035 797 1070 757 1108 763 1130 737 1228 753 1248 740 1280M802 1035 892 1080 925 1035M520 1050 532 1035"/></g>
</g>
<!-- filled marks -->
<use href="#city" fill="none" stroke="#9aa9b5" stroke-width="4"/>
<use href="#city" fill="#a6dfd2"/>
<g stroke="#f4fbfa" stroke-width="1.500" class="[&_path]:[vector-effect:non-scaling-stroke]" fill="none">
<g transform="translate(740 340) scale(.3954 .36995)">
<g fill="#9cd9d0"><path d="M662 710 683 695 738 716 742 702 807 698 867 737 856 830 925 848 970 830 1002 850 968 905 1020 947 960 1025 905 1043 895 972 832 1020 797 978 765 987 755 935 720 927 736 870Z"/><path d="M867 737 928 702 1035 700 1060 715 1155 735 1183 780 1230 783 1202 815 1222 855 1182 888 1078 846 1088 815 1065 848 1002 850 970 830 925 848 856 830Z"/><path d="M1375 660 1430 626 1483 662 1487 650 1545 672 1544 816 1467 818 1435 826 1375 795 1382 750Z"/></g>
<g fill="#a3dcd1"><path d="M1002 850 1065 848 1078 846 1182 888 1190 942 1210 980 1160 996 1118 1023 1085 960 1055 940 1020 947 968 905Z"/><path d="M820 1018 832 1020 895 972 905 1043 960 1025 947 1105 972 1122 920 1212 850 1250 816 1203Z"/><path d="M960 1025 1020 947 1055 940 1085 960 1118 1023 1047 1100 972 1122 947 1105Z"/><path d="M778 1280 787 1252 850 1250 920 1212 960 1272 1016 1325 1016 1375 983 1385 983 1450 878 1490 870 1455 815 1430 868 1428 855 1387 770 1362 757 1345Z"/></g>
<path fill="#a9e1d3" d="M603 1080 655 1077 703 1053 765 987 797 978 820 1018 816 1203 850 1250 787 1252 778 1280 710 1323 668 1282 645 1210 620 1200Z"/>
<path fill="#9ad8ce" d="M1160 996 1210 980 1280 950 1287 1023 1315 1072 1280 1097 1304 1108 1298 1180 1240 1200 1203 1138 1222 1095 1180 1065 1186 1022Z"/>
<path fill="#8bcfcc" d="M1160 996 1186 1022 1180 1065 1222 1095 1203 1138 1150 1175 1132 1250 1114 1257 1080 1150 1047 1100 1118 1023Z"/>
<path fill="#95d3cf" d="M1047 1100 1080 1150 1114 1257 1025 1290 1016 1325 960 1272 920 1212 972 1122Z"/>
<path fill="#87cccb" d="M1203 1138 1240 1200 1298 1180 1336 1238 1290 1275 1260 1282 1250 1327 1210 1340 1180 1285 1150 1280 1132 1250 1150 1175Z"/>
<path fill="#98d6cf" stroke="none" d="M983 1450 983 1385 1016 1375 1045 1408 1062 1455 1115 1495 1162 1525 1218 1467 1320 1440 1342 1495 1568 1465V1568H925L928 1530 878 1490Z"/>
<path fill="#80c9cc" d="M1025 1290 1132 1255 1150 1280 1138 1308 1165 1350 1226 1390 1195 1408 1203 1445 1218 1467 1205 1490 1162 1525 1115 1495 1098 1470 1062 1455 1045 1408 1016 1375 1016 1325Z"/>
<path fill="#9cd9d0" d="M1250 1327 1210 1340 1180 1285 1150 1280 1138 1308 1165 1350 1226 1390 1195 1408 1203 1445 1218 1467 1320 1440Z"/>
<path fill="#7cc5cb" stroke="none" d="M1045 1524 1115 1495 1162 1525 1203 1512 1185 1568H1068Z"/>
<path d="M1068 1568 1045 1524 1115 1495 1162 1525 1190 1512 1203 1530 1180 1550 1185 1568M1230 783 1335 910 1355 912 1387 830 1375 795M1357 670 1375 660M1355 912 1378 950 1483 975 1490 960 1478 935 1525 905 1537 858 1544 816M1378 950 1355 1005 1287 1023M1483 975 1495 1045 1477 1106 1390 1098 1304 1108M1477 1106 1515 1135M1445 1108 1463 1170 1430 1185 1430 1202 1362 1243 1336 1238M1463 1170 1522 1200 1526 1230 1510 1340 1425 1348M1425 1330 1380 1322 1382 1265 1362 1243M1380 1322 1350 1340 1350 1355 1307 1357 1307 1415M1342 1495 1437 1462 1418 1418 1425 1330M1500 1345 1522 1420 1503 1448 1437 1462M1320 1440 1342 1495M1355 1497 1355 1568M1342 1495 1314 1500 1318 1568M983 1450 878 1490 928 1530 925 1568M1202 815 1222 855"/>
</g>
<g transform="translate(1300 340) scale(.38265 .36995)">
<path fill="#ade3d5" d="M134 742 210 756 262 688 376 733 374 780 355 878 210 886 203 902 125 858 134 818 130 770Z"/>
<path fill="#a9e1d3" stroke="none" d="M372 890 450 740 475 482 580 490 598 510 565 527 570 583 620 635 613 660 643 750 595 880 567 882 565 960 516 1028 480 995 448 1024 325 988Z"/>
<path fill="#9bd8d0" stroke="none" d="M0 1352 103 1340 88 1345 110 1418 158 1455V1568H0Z"/><path fill="#9cd9d0" d="M205 1387 228 1305 237 1230 307 1336 380 1340 408 1375 350 1397 340 1435 233 1435Z"/>
<path d="M125 858 110 903 62 935 76 962 66 977 80 1045 62 1106 135 1135 175 1103 185 1120 237 1128 238 1178M76 962 190 965 280 970 325 988 448 1024 480 995 516 1028M372 890 362 955 325 988 275 1080 280 1138 238 1178 293 1253 355 1240 383 1275 528 1182 585 1142 628 1160 650 1120 650 1145 718 1155M583 1065 585 1142M110 1200 113 1230 232 1214 238 1178M113 1230 97 1335 103 1340M88 1345 110 1418 92 1445 20 1465M110 1418 125 1420 158 1455 158 1568M232 1214 237 1235 205 1253 228 1305 218 1310 205 1387 233 1435M380 1340 435 1398 472 1408 522 1300 500 1265 537 1230 528 1182M205 1387 160 1420 155 1455M268 1430 252 1550M158 1537 255 1545 300 1565 435 1480 415 1430 472 1408M468 1430 495 1430 497 1505 440 1560M497 1380 550 1408 568 1400 640 1322 677 1325 677 1300 765 1300M677 1325 745 1390 695 1392 735 1437 720 1445 752 1510 630 1530 568 1400M752 1510 848 1475M472 1408 497 1380M685 1525 700 1568"/>
</g>
<g transform="translate(740 900) scale(.3954 .4477)">
<path fill="#9bd8d0" stroke="none" d="M380 72 453 68 568 30 573 60 615 73 605 158 615 160 602 252 583 255 480 308 427 285 397 210ZM765 112 838 92 868 65 922 67 930 44H1568V300L1448 310 1408 283 1335 342 1230 358 1225 505 1160 605 1048 670 1070 748 1145 795 1080 890 975 893 877 957 755 830 690 705 692 665 802 635 725 553 757 480 800 333 755 247 790 220Z"/>
<path fill="#8fd1ce" stroke="none" d="M1165 65 1180 44H1355V60L1568 55V205L1385 195 1335 342 1230 358 1240 240 1180 120Z"/>
<path fill="#a4ddd1" d="M310 78 380 72 397 210 427 285 375 285 330 230 335 205 300 180Z"/>
<path fill="#93d4cf" d="M607 305 700 227 755 247 770 272 800 333 765 375 755 430 740 443 705 447 673 435 635 365 595 343Z"/>
<path fill="#84cbcc" d="M800 333 862 340 880 375 897 437 845 440 845 483 757 480 740 443 755 430 765 375Z"/>
<path fill="#8dd0cd" d="M640 470 673 435 705 447 740 443 757 480 725 553 690 572 638 570Z"/>
<path fill="#8ed0cd" d="M880 375 955 357 990 353 995 320 1025 345 1095 432 1070 480 990 492 930 470 897 437Z"/>
<path fill="#90d1ce" d="M995 120 1105 97 1150 135 1180 165 1188 170 1185 222 1125 220 1118 238 1072 240 1055 196 1027 195 1000 160Z"/>
<path fill="#7cc5cb" stroke="none" d="M1070 40H1165V65L1130 118 1105 97Z"/><path d="M1068 40 1105 97 1130 118 1165 65V30"/>
<path fill="#6fbfc9" d="M907 183 940 150 995 120 1000 160 1027 195 980 215 922 228Z"/>
<path fill="#4aabbf" d="M980 215 1055 196 1072 240 1070 290 995 300Z"/>
<path fill="#55b0c0" d="M1072 240 1118 238 1125 220 1180 222 1175 250 1142 275 1138 310 1105 332 1050 310 1070 290Z"/>
<path fill="#80c9cb" d="M1025 345 1050 320 1105 332 1093 347 1122 382 1095 432Z"/>
<path fill="#64b9c5" d="M1230 250 1240 290 1230 358 1122 382 1093 347 1142 305 1195 300Z"/>
<path fill="#2f95b3" d="M1170 228 1230 232 1232 262 1195 300 1168 290 1175 262Z"/>
<path fill="#3090b2" d="M1188 172 1252 165 1265 200 1215 240 1188 225Z"/>
<path fill="#3ea4ba" d="M1232 235 1265 212 1290 192 1360 218 1358 268 1315 250 1280 258 1240 255Z"/>
<path fill="#5cb5c4" d="M1190 120 1240 105 1255 150 1230 165 1190 165ZM1255 103 1290 150 1265 155ZM1370 175 1405 170V200L1370 205Z"/>
<path fill="#38a0b8" d="M1325 150 1355 130 1362 145ZM1240 104H1252V135Z"/>
<path fill="#36618c" d="M1246 164 1270 168 1288 195 1270 205 1260 190Z"/>
<path fill="#96d5d0" d="M1432 640 1522 555 1568 600V700L1525 728 1485 705 1470 655Z" stroke="none"/>
<path d="M1522 555 1432 640 1470 655 1485 705 1525 728M453 68 482 118 473 190 485 240 427 285M568 30 573 60 615 73 605 158 590 158 615 160 612 217 588 218 602 252 583 255M615 73 765 112 790 220 755 247M765 112 838 92 868 65 922 67 928 44M838 92 865 130 907 183M770 272 902 240 925 240M922 228 940 300 955 357 902 240M922 67 965 38 1000 75 1060 30M1265 95 1300 150M725 553 802 635M757 480 845 483M990 492 988 540 925 582 890 620 888 650 763 697 755 765M925 582 970 620 978 658 1015 650 1048 670 1070 748 1118 765 1145 795M1048 670 1160 605 1078 498 1070 480M1160 605 1210 563 1175 515 1225 505 1217 440 1243 430 1230 358M1210 563 1250 568 1270 595 1313 597M1160 605 1173 648 1230 637 1262 680 1218 730 1232 733 1228 795M1257 645 1262 680M1257 645 1427 667 1432 640 1408 517 1370 512 1325 485 1350 440 1320 425 1402 382M1290 650 1325 580 1328 527 1370 512M1225 505 1325 455M745 765 863 778 865 795 932 810 962 848 975 893M1122 382 1230 358 1335 342 1402 382 1435 378 1425 350 1448 310 1500 300 1568 310M1335 342 1362 220 1385 195 1460 198 1568 210M1335 342 1408 283 1448 310M1402 382 1453 410 1433 440 1460 483 1432 532 1408 517M1460 483 1510 492 1522 528 1505 555M1525 728 1490 762 1433 767 1390 740 1385 700 1427 667M1433 767 1444 823M1435 378 1490 370 1568 320M1507 862 1520 848 1568 856M1240 290 1315 250M1260 285 1335 342M1285 258 1295 275 1325 280 1330 255"/>
<path stroke-width="1" d="M1150 135 1190 118 1255 100 1305 95 1355 60 1568 55M1290 95 1325 130 1400 135 1490 130 1568 125M1355 60 1385 95 1375 135M1435 45 1430 75 1490 85 1568 80M1420 60 1410 100 1450 110 1490 100 1568 105M1400 150 1495 155M1290 150 1325 150 1370 175M1300 170 1330 185 1365 165 1400 150M1310 130 1300 200M1340 100 1350 125M1320 95 1340 120 1385 115M1415 95V185M1450 75 1445 130 1465 150M1485 45V130M1490 130 1495 200M1530 60V130M1405 170 1450 165 1495 185M1430 150 1425 195M1465 155V198M1190 140 1250 130M1210 115 1220 165M1225 110 1240 165M1290 155 1310 180"/>
</g>
<g transform="translate(1300 900) scale(.38265 .4477)">
<path fill="#9dd9d1" stroke="none" d="M60 44H155L150 180 60 185Z"/>
<path fill="#97d6d0" stroke="none" d="M0 205 150 210 192 237 187 270 170 300 217 315 207 360 150 340 90 300 40 310 0 300Z"/>
<path fill="#9cdad0" d="M572 422 628 395 715 425 780 458 675 515 675 567 655 565 640 525 555 528 530 505 485 460Z"/>
<path fill="#96d5d0" stroke="none" d="M103 557 202 645 155 690 155 720 110 728 75 715 50 660 18 645Z"/>
<path d="M60 206 150 210 192 237 187 270 170 300 217 315 207 360 150 340 90 300 40 310M18 645 103 557 202 645 155 690 155 720 110 728 75 715 50 660ZM153 44 148 80 150 180M148 80 183 95 183 105 333 78 300 45 155 20M300 45 440 5M333 78 353 140 322 180 322 200 380 220 380 300M150 200 220 240 290 235 322 200M150 190 322 180M353 140 420 148 473 118 512 138 522 82 440 38 437 0M522 82 545 95 570 110M570 68 570 95 597 102 583 130 660 145 720 130 685 12 630 10 570 68M720 130 750 198 925 213 1000 180M512 138 540 155 560 215 625 280 712 277 820 282 880 268 925 213M560 215 515 215 500 250 512 340 435 355 380 300M625 280 620 360 628 395 715 425 772 385 768 350 712 277M620 360 545 373 572 422 485 460 417 430 435 355M880 268 897 318 930 323 980 305 1008 320 1005 375 1060 433M1008 320 1040 280 1145 230 1190 172M780 458 805 495 917 510M555 528 550 580 530 578 540 610M655 565 675 625 645 680 677 700 680 750M207 358 285 360 270 400 283 480 300 540 320 567 365 595M285 360 287 350 315 345 330 305 345 320 380 300M315 345 320 365 400 420 380 447 345 478 340 445 315 490 283 480M380 447 413 470 413 573M417 430 457 480 413 470M0 380 100 345 165 375 120 378 165 460 148 495 110 527 75 522 70 490 45 483 15 530 0 520M40 310 10 350 20 375M110 527 103 557M148 495 205 508 210 525 270 535 275 565 202 645M202 660 270 705 340 708M275 565 300 540M50 740 110 728M155 720 200 768 177 857 130 850 94 862M200 768 237 795 250 775 305 795M177 857 195 885 225 900M30 765 28 825"/>
<path fill="#dfe3e6" stroke="#cfd6dc" d="M95 150 130 155 150 170 125 188 95 180Z"/><path fill="#36618c" stroke="none" d="M78 180 92 170 110 178 98 188Z"/>
</g>
</g>
<g transform="translate(1300 900) scale(.38265 .4477)"><path class="[vector-effect:non-scaling-stroke]" fill="#a9e1d3" stroke="#111" stroke-width="2" d="M368 596 413 573 445 585 485 587 542 613 597 680 485 712 462 727 477 742 475 752 432 769 388 750 370 720 382 702 342 708 360 635Z"/></g>
<g font-size="25" text-anchor="middle" fill="#93cdc9" font-family="Noto Sans, sans-serif">
<text x="1259" y="609">N14</text><text x="1320" y="614">N21</text><text x="1142" y="634">N20</text><text x="1082" y="664">NW7</text><text x="1170" y="681">N12</text><text x="1237" y="676">N11</text><text x="1309" y="669">N13</text><text x="1398" y="635">N9</text><text x="1509" y="620">E4</text><text x="1385" y="682">N18</text><text x="1150" y="721">N3</text><text x="1295" y="720">N22</text><text x="1237" y="739">N10</text><text x="1092" y="753">NW4</text><text x="1022" y="766">NW9</text><text x="1370" y="738">N17</text><text x="1547" y="746">E18</text><text x="1466" y="761">E17</text><text x="1286" y="771">N8</text><text x="1141" y="792" fill="#84c2c3">NW11</text><text x="1226" y="801" fill="#77bbc0">N6</text><text x="1313" y="810">N4</text><text x="1538" y="810">E11</text><text x="1454" y="820">E10</text><text x="1400" y="835">E5</text><text x="1093" y="841">NW2</text><text x="1185" y="854" fill="#72b8c0">NW3</text><text x="1284" y="860">N7</text><text x="1323" y="860">N5</text><text x="1553" y="868">E7</text><text x="1595" y="863">E12</text><text x="1044" y="883">NW10</text><text x="1135" y="893" fill="#87c8c6">NW6</text><text x="1381" y="886">E8</text><text x="1430" y="886">E9</text><text x="1487" y="887">E20</text><text x="1316" y="903" fill="#87c8c6">N1</text><text x="1234" y="919" fill="#80c2c4">NW1</text>
<text x="877" y="982">W7</text><text x="954" y="977" fill="#8ac9c6">W5</text><text x="1016" y="986">W3</text><text x="1074" y="983">W12</text><text x="1175" y="978" fill="#80c2c4">W2</text><text x="1157" y="936" fill="#80c2c4">W9</text><text x="1229" y="961" fill="#74b7c0">W1G</text><text x="1304" y="940" fill="#80c2c4">EC1R</text><text x="1303" y="980" fill="#80c2c4">EC1Y</text><text x="1016" y="1051" fill="#84c5c5">W4</text><text x="1077" y="1039" fill="#8ac9c6">W6</text><text x="1172" y="1027" fill="#449ab0">SW7</text><text x="1245" y="1021" fill="#368ea9">SW1E</text><text x="1329" y="1027" fill="#87c8c6">SE1</text><text x="1168" y="1070" fill="#70b6be">SW10</text><text x="1071" y="1171" fill="#8ac9c6">SW15</text><text x="1195" y="1116">SW11</text><text x="1290" y="1107">SW9</text><text x="1154" y="1161" fill="#8ac9c6">SW18</text><text x="1279" y="1165">SW2</text><text x="1099" y="1232" fill="#8ac9c6">SW19</text><text x="1195" y="1217">SW17</text><text x="1312" y="1217">SE27</text><text x="1335" y="1259">SE19</text>
<text x="1393" y="929">E2</text><text x="1450" y="929">E3</text><text x="1545" y="936">E13</text><text x="1605" y="941">E6</text><text x="1548" y="981">E16</text><text x="1390" y="996">E1W</text><text x="1470" y="1007">E14</text><text x="1688" y="1008">SE28</text><text x="1516" y="1052">SE10</text><text x="1455" y="1076">SE8</text><text x="1639" y="1076">SE18</text><text x="1383" y="1105">SE15</text><text x="1540" y="1109" fill="#8ac9c6">SE3</text><text x="1484" y="1135">SE13</text><text x="1377" y="1155">SE22</text><text x="1607" y="1174">SE9</text><text x="1480" y="1202">SE6</text><text x="1401" y="1228">SE26</text><text x="1370" y="1317">SE25</text>
</g>
<g font-size="25" text-anchor="middle" fill="#8baab7" stroke="#e9e9e9" stroke-width="4" paint-order="stroke" font-family="Noto Sans, sans-serif">
<text x="907" y="388">AL2</text><text x="1358" y="406">EN7</text><text x="1166" y="422">EN6</text><text x="1443" y="419">EN8</text><text x="1545" y="404">EN9</text><text x="1724" y="433">CM16</text><text x="960" y="462">WD7</text><text x="833" y="484">WD25</text><text x="969" y="543">WD6</text><text x="1097" y="541">EN5</text><text x="1218" y="553">EN4</text><text x="1329" y="511">EN2</text><text x="1380" y="553">EN1</text><text x="1442" y="576">EN3</text><text x="1606" y="565">IG10</text><text x="1790" y="594">RM4</text><text x="846" y="585">WD23</text><text x="772" y="585">8</text><text x="772" y="530">7</text><text x="764" y="390">5</text><text x="782" y="633">WD19</text>
<text x="922" y="677">HA7</text><text x="995" y="672">HA8</text><text x="796" y="728">HA5</text><text x="893" y="724">HA3</text><text x="836" y="778">HA2</text><text x="938" y="864">HA0</text><text x="787" y="890">UB5</text><text x="877" y="914">UB6</text><text x="1791" y="711">RM5</text><text x="1667" y="642">IG7</text><text x="1573" y="646">IG9</text><text x="1563" y="702">IG8</text><text x="1670" y="737">IG6</text><text x="1610" y="751">IG5</text><text x="1743" y="766">RM6</text><text x="1839" y="762">RM11</text><text x="1675" y="786">IG2</text><text x="1692" y="826">IG3</text><text x="1803" y="805">RM7</text><text x="1677" y="922">IG11</text><text x="1738" y="920">RM9</text><text x="1844" y="963">R</text><text x="1856" y="875">R</text>
<text x="826" y="963">UB1</text><text x="774" y="950">B4</text><text x="814" y="1017">UB2</text><text x="791" y="1059">TW5</text><text x="940" y="1054">TW8</text><text x="965" y="1098">TW9</text><text x="836" y="1113">TW3</text><text x="842" y="1174">TW2</text><text x="912" y="1168">TW1</text><text x="980" y="1180">TW10</text><text x="773" y="1204">13</text><text x="829" y="1246">TW12</text><text x="900" y="1243">TW11</text><text x="988" y="1249">KT2</text><text x="774" y="1273">6</text><text x="854" y="1306">KT8</text><text x="954" y="1294">KT1</text><text x="1035" y="1311">KT3</text><text x="1143" y="1331">SM4</text><text x="1214" y="1309">CR4</text><text x="1303" y="1309">CR7</text><text x="937" y="1353">KT6</text><text x="1050" y="1374">KT4</text><text x="770" y="1376">T12</text><text x="1150" y="1397">SM1</text><text x="844" y="1407">KT10</text><text x="1243" y="1424">SM6</text><text x="931" y="1450">KT9</text><text x="996" y="1452">KT19</text><text x="1121" y="1468">SM2</text>
<text x="1758" y="1029" stroke="none">DA18</text><text x="1836" y="1083">DA8</text><text x="1777" y="1115">DA7</text><text x="1689" y="1121">DA16</text><text x="1683" y="1187">DA15</text><text x="1771" y="1198">DA5</text><text x="1729" y="1240">DA14</text><text x="1542" y="1269">BR1</text><text x="1636" y="1267">BR7</text><text x="1443" y="1307">BR3</text><text x="1810" y="1329">BR8</text><text x="1482" y="1392">BR4</text><text x="1553" y="1387">BR2</text><text x="1413" y="1421">CR0</text><text x="1683" y="1445">BR6</text><text x="1367" y="1475">CR2</text>
</g>
</svg>
              <button aria-label="Search map" class="absolute left-5 top-5 w-14 h-14 flex items-center justify-center bg-[#f3f3f3]/90 border-2 border-[#a2a2a2] text-[#444]"><svg class="size-6"><use href="#lens"/></svg></button>
              <div class="absolute left-5 top-[95px] w-14 h-[218px] flex flex-col items-center bg-[#f3f3f3]/90 border-2 border-[#a2a2a2]">
                <button aria-label="Zoom in" class="w-full h-[50px] flex items-center justify-center"><svg class="size-5" viewBox="0 0 20 20"><path d="M10 0V20M0 10H20" stroke="#444" stroke-width="4"/></svg></button>
                <button aria-label="Zoom out" class="w-full h-[50px] flex items-center justify-center"><svg class="size-5" viewBox="0 0 20 20"><path d="M0 10H20" stroke="#444" stroke-width="4"/></svg></button>
                <button aria-label="Reset pin" class="mt-1 w-11 h-11 flex items-center justify-center bg-[#d9d9d9] border-2 border-[#a2a2a2]"><svg class="size-9"><use href="#pin"/></svg></button>
                <span class="mt-2.5 w-10 h-0.5 bg-[#d5d5d5]"></span>
                <button aria-label="More tools" class="w-full flex-1 pt-1 flex items-center justify-center"><svg class="w-3 h-5" viewBox="0 0 12 20"><path d="M0 0L12 10L0 20Z" fill="#444"/></svg></button>
              </div>
              <p class="absolute left-1.5 bottom-1 h-6 px-1.5 bg-white/80 font-['Liberation_Sans',Arial,sans-serif] text-[16px] leading-6 text-[#333] whitespace-nowrap">© 2023 Mapbox © OpenStreetMap</p>
              <div class="absolute left-[715px] top-[899px] w-[276px] h-[104px] pl-3.5 flex flex-col justify-center bg-white border-2 border-[#c9c9c9] shadow-[4px_4px_4px_rgba(0,0,0,0.35)] text-[25px] leading-9 text-[#666]">
                <div class="flex"><span class="w-[133px]">Outcode:</span><strong class="text-[#222]">SE6</strong></div>
                <div class="flex"><span class="w-[133px]">Avg. Price:</span><strong class="text-[#222]">398,785</strong></div>
              </div>
            </div>
          </section>
          <section class="w-[308px] shrink-0 bg-white border-2 border-[#c9c9c9]">
            <h3 class="h-[58px] pl-3 pt-4 bg-[#f9f9f9]">AVG(Price)</h3>
            <div class="mt-2 ml-[7px] mr-[9px] h-8 border-2 border-[#9c9684] bg-linear-to-r from-[#a8e3d3] via-[#0b8bab] via-60% to-[#1f4b80]"></div>
            <div class="px-2 pt-1 pb-2 flex justify-between text-[25px] font-['Noto_Sans',sans-serif]"><span>263,249</span><span>6,715,097</span></div>
          </section>
        </div>
      </div>
    </div>

    <!-- Data guide -->
    <aside class="relative w-[348px] shrink-0 h-full overflow-hidden bg-white border-l-2 border-[#c9c9c9] text-[#444]">
      <div class="h-[51px] pl-9 pr-3 flex items-center justify-between bg-[#f9f9f9] border-b-2 border-[#c9c9c9] text-black font-semibold">Data Guide<button aria-label="Close guide"><svg class="size-4" viewBox="0 0 16 16"><path d="M1 1L15 15M15 1L1 15" stroke="#555" stroke-width="2"/></svg></button></div>
      <div class="h-[95px] pl-[34px] flex items-center gap-[18px] border-b-2 border-[#e6e6e6] text-[26px] font-bold"><svg class="w-6 h-6" viewBox="0 0 24 24" fill="none" stroke="#555" stroke-width="2"><path d="M1 1H23V23H1ZM8 19V14M12 19V6M16 19V10"/></svg>PostCodes</div>
      <section class="h-[400px] pl-8 border-b-2 border-[#e6e6e6]">
        <h2 class="h-[88px] pr-[30px] flex items-center justify-between text-[27px] font-bold">Viz Details<svg class="size-[22px]"><use href="#minus"/></svg></h2>
        <label for="desc" class="block mt-[22px] mb-2">Viz description</label>
        <span class="relative block w-[282px]"><textarea id="desc" placeholder="Enter a description that helps users understand this viz" class="block w-full h-24 pl-2 pt-2 leading-7 border-2 border-[#c0c0c0] rounded-[3px] overflow-hidden resize-none placeholder:text-[#666]"></textarea><svg class="absolute right-1 bottom-1 w-4 h-3.5" viewBox="0 0 16 14"><path d="M1 13L15 1M9 13L15 8" stroke="#444" stroke-width="2"/></svg></span>
        <h3 class="mt-8">Additional resources</h3>
        <button class="mt-[22px] ml-1 flex items-center gap-5 text-[#666]"><svg class="size-[22px]"><use href="#plus"/></svg>Add link</button>
      </section>
      <h2 class="h-[90px] pl-8 pr-[30px] flex items-center justify-between border-b-2 border-[#e6e6e6] text-[27px] font-bold">Applied Filters<svg class="size-[22px]"><use href="#plus"/></svg></h2>
      <section class="h-[276px] pl-8 border-b-2 border-[#e6e6e6]">
        <h2 class="h-[90px] pr-[30px] flex items-center justify-between text-[27px] font-bold">Data in This Viz<svg class="size-[22px]"><use href="#minus"/></svg></h2>
        <p class="mt-3.5 pl-1 flex items-center gap-5 text-[27px] leading-8 font-light"><svg class="w-[18px] h-3" viewBox="0 0 18 12"><path d="M1 1L9 9L17 1" fill="none" stroke="#444" stroke-width="2"/></svg>London Housing ...</p>
        <p class="mt-[26px] h-10 pl-2.5 flex items-center gap-6"><svg class="size-[22px] text-[#147397]"><use href="#globe"/></svg>Outcode</p>
        <p class="h-10 pl-2.5 flex items-center gap-[26px]"><svg class="size-5 text-[#00a86b]"><use href="#hash"/></svg>Avg. Price</p>
      </section>
      <h2 class="h-[90px] pl-8 pr-[30px] flex items-center justify-between border-b-2 border-[#e6e6e6] text-[27px] font-bold">Data Summary<svg class="size-[22px]"><use href="#plus"/></svg></h2>
      <h2 class="h-[90px] pl-8 pr-[30px] flex items-center justify-between text-[27px] font-bold">Detected Outlier...<svg class="size-[22px]"><use href="#minus"/></svg></h2>
      <div class="mt-3.5 pl-[34px] flex items-center gap-5 text-[#222]"><svg class="w-[22px] h-7 shrink-0" viewBox="0 0 22 28" fill="none" stroke="#555" stroke-width="2"><path d="M8 23C8 18 1 17 1 10C1 -2 21 -2 21 10C21 17 14 18 14 23ZM8 27H14"/></svg><p class="whitespace-nowrap">Tableau detected<br>these marks as<br>unusual compared to<br>other marks in the<br>selected viz.</p></div>
      <div class="mt-[63px] pl-8 flex items-start gap-3"><span class="mt-0.5 w-[84px] h-8 flex items-center justify-center border-2 border-[#0b62c9] rounded-[3px] text-[#0b62c9]">High</span><div><strong class="block text-[#222]">W1S</strong>Average of</div><svg class="ml-[38px] mt-[42px] w-3 h-5" viewBox="0 0 12 20"><path d="M1 1L11 10L1 19" fill="none" stroke="#555" stroke-width="2"/></svg></div>
      <div class="absolute right-1 top-[57px] w-3.5 h-[918px] rounded-full bg-[#6b6b6b]"></div>
    </aside>
  </main>

  <!-- Sheet tabs -->
  <nav aria-label="Sheets" class="h-[61px] shrink-0 flex bg-[#e0e0e0] border-y-2 border-[#c6c6c6] text-[#444] [&>button]:border-r-2 [&>button]:border-[#bdbdbd] [&>button]:flex [&>button]:items-center [&>button]:pl-3 [&>button]:whitespace-nowrap">
    <button class="w-[262px] gap-3"><span class="pl-1.5"><svg class="w-[18px] h-6"><use href="#db"/></svg></span>Data Source</button>
    <button class="w-[253px]">Date and Time Data</button>
    <button class="w-[136px]">Bar Chart</button>
    <button class="w-[146px]">Line Chart</button>
    <button class="w-[88px]">Maps</button>
    <button class="w-[216px]">Cities and Towns</button>
    <button class="w-[149px] bg-[#f9f9f9] font-bold">PostCodes</button>
    <button aria-label="New worksheet" class="w-[63px]"><svg class="ml-1.5 w-8 h-8" viewBox="0 0 32 32"><path d="M16 23H2V2H25V15M8 18V14M13 18V8M17 18V12M21 16V10" fill="none" stroke="#555" stroke-width="2"/><path d="M24 16V30M17 23H31" stroke="#555" stroke-width="4"/></svg></button>
    <button aria-label="New dashboard" class="w-16"><svg class="ml-1.5 w-8 h-8" viewBox="0 0 32 32"><path d="M16 23H2V2H24V15M2 12H24M13 2V23" fill="none" stroke="#555" stroke-width="2"/><path d="M24 16V30M17 23H31" stroke="#555" stroke-width="4"/></svg></button>
    <button aria-label="New story" class="w-16"><svg class="ml-1.5 w-8 h-8" viewBox="0 0 32 32"><path d="M13 24L2 21V2L13 5L24 2V15M13 5V24" fill="none" stroke="#555" stroke-width="2"/><path d="M24 16V30M17 23H31" stroke="#555" stroke-width="4"/></svg></button>
  </nav>
  <!-- Status bar -->
  <footer class="h-[41px] shrink-0 flex items-center bg-[#e6e6e6] text-[20px] text-black">
    <span class="pl-6">166 marks</span><span class="pl-[34px]">1 row by 1 column</span><span class="pl-[34px]">SUM of AVG(Price): 176,151,235</span>
    <div class="ml-auto h-full flex text-[#aaa] [&>div]:border-l-2 [&>div]:border-[#bdbdbd] [&>div]:h-full">
      <div class="w-[254px]"></div><div class="w-[54px]"></div><div class="w-[54px]"></div><div class="w-[94px]"></div>
      <div class="w-[142px] flex items-center justify-evenly">
        <button aria-label="First"><svg class="w-3 h-3.5" viewBox="0 0 12 14"><path d="M1 0V14" stroke="#aaa" stroke-width="2"/><path d="M12 0V14L4 7Z" fill="#aaa"/></svg></button>
        <button aria-label="Previous"><svg class="w-2 h-3.5" viewBox="0 0 8 14"><path d="M8 0V14L0 7Z" fill="#aaa"/></svg></button>
        <button aria-label="Next"><svg class="w-2 h-3.5" viewBox="0 0 8 14"><path d="M0 0V14L8 7Z" fill="#aaa"/></svg></button>
        <button aria-label="Last"><svg class="w-3 h-3.5" viewBox="0 0 12 14"><path d="M11 0V14" stroke="#aaa" stroke-width="2"/><path d="M0 0V14L8 7Z" fill="#aaa"/></svg></button>
      </div>
      <div class="w-[153px] pl-4 flex items-center gap-5">
        <button aria-label="Sheet sorter"><svg class="size-[22px]" viewBox="0 0 22 22"><path d="M0 3H22M0 11H22M0 19H22" stroke="#aaa" stroke-width="6" stroke-dasharray="6 2"/></svg></button>
        <button aria-label="Filmstrip"><svg class="size-[22px]" viewBox="0 0 22 22"><path d="M0 0H22V14H0Z" fill="#aaa"/><path d="M0 19H22" stroke="#aaa" stroke-width="6" stroke-dasharray="6 2"/></svg></button>
        <button aria-label="Tabs view"><svg class="size-[22px]" viewBox="0 0 22 22"><path d="M0 0H22V22H0Z" fill="#555"/></svg></button>
      </div>
    </div>
  </footer>
</div>
</body>
</html>
